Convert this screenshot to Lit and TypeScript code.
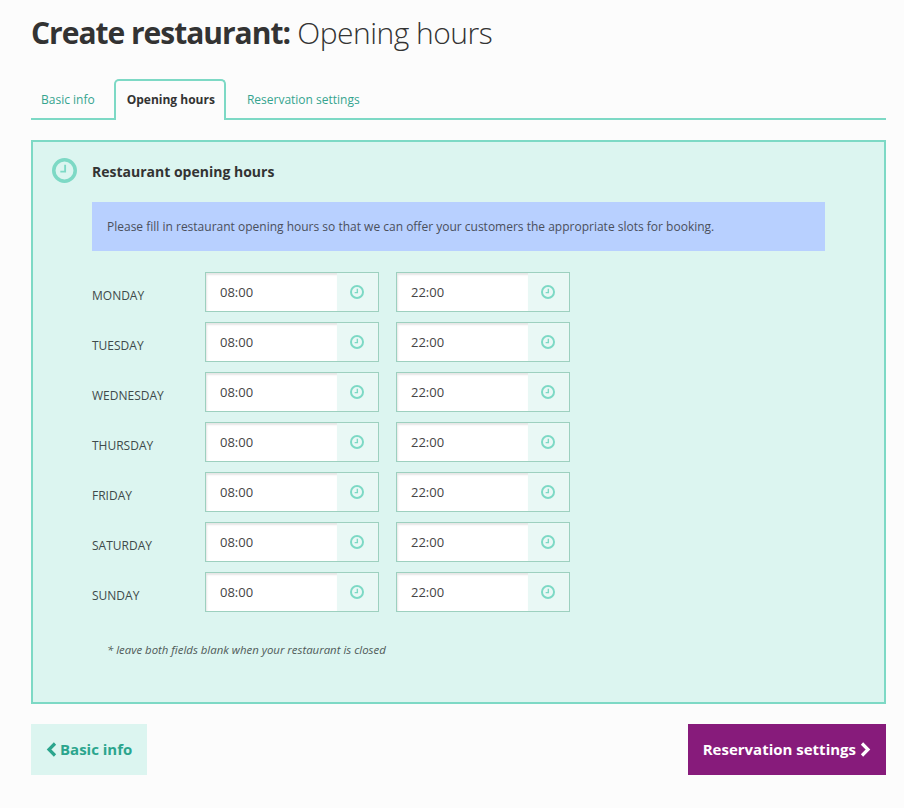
import { LitElement, html, css, svg } from "lit";
import { customElement } from "lit/decorators.js";

const DAYS = ["Monday", "Tuesday", "Wednesday", "Thursday", "Friday", "Saturday", "Sunday"];

const clock = (size: number, stroke: number, hand: number) => html`
	<svg class="clock" width=${size} height=${size} viewBox="0 0 24 24" aria-hidden="true">
		${svg`<circle cx="12" cy="12" r=${12 - stroke / 2} fill="none" stroke="currentColor" stroke-width=${stroke}></circle>
		<path d="M12.6 6.5v6.6H8" fill="none" stroke="currentColor" stroke-width=${hand}></path>`}
	</svg>
`;

@customElement("app-root")
export class AppRoot extends LitElement {
	static styles = css`
		:host {
			display: block;
			min-height: 808px;
			background: #fcfcfc;
			color: #333;
			font-family: "Open Sans", sans-serif;
		}

		.page {
			padding: 0 18px 33px 31px;
		}

		h1 {
			margin: 0;
			padding-top: 12px;
			height: 79px;
			box-sizing: border-box;
			font-size: 30px;
			line-height: 41px;
			font-weight: 300;
			letter-spacing: -0.5px;
			color: #333;
		}

		h1 b {
			font-weight: 700;
			letter-spacing: -1.02px;
		}

		.tabs {
			display: flex;
			height: 41px;
			box-sizing: border-box;
			border-bottom: 2px solid #7dd9c5;
			font-size: 12px;
		}

		.tab {
			padding: 0 10px;
			line-height: 41px;
			color: #35a48f;
		}

		.tab.active {
			height: 41px;
			box-sizing: border-box;
			margin: 0 11px 0 9px;
			padding: 0 9px 0 11px;
			line-height: 38px;
			border: 2px solid #7dd9c5;
			border-bottom: 0;
			border-radius: 5px 5px 0 0;
			background: #fcfcfc;
			color: #333;
			font-weight: 700;
		}

		.panel {
			margin-top: 20px;
			height: 564px;
			box-sizing: border-box;
			border: 2px solid #7dd9c5;
			background: #dcf5f0;
			padding: 0 59px;
		}

		.panel-title {
			display: flex;
			align-items: center;
			height: 60px;
			font-size: 14px;
			font-weight: 700;
		}

		.panel-title span {
			margin-top: -2px;
		}

		.panel-title .clock {
			margin: -3px 15px 0 -40px;
			color: #7dd9c5;
		}

		.notice {
			height: 49px;
			box-sizing: border-box;
			padding: 0 15px;
			background: #b8d0ff;
			font-size: 12px;
			line-height: 49px;
			color: #4a4f5c;
		}

		.rows {
			display: grid;
			gap: 10px;
			margin-top: 21px;
		}

		.row {
			display: flex;
			align-items: center;
			height: 40px;
		}

		.day {
			width: 113px;
			padding-top: 7px;
			font-size: 12px;
			text-transform: uppercase;
			color: #3e4a4a;
		}

		.field {
			display: flex;
			width: 174px;
			height: 40px;
			box-sizing: border-box;
			border: 1px solid #9dd0bf;
			background: #e9f8f5;
			margin-right: 17px;
		}

		.field input {
			width: 131px;
			height: 100%;
			box-sizing: border-box;
			border: 0;
			border-radius: 0;
			outline: 0;
			padding: 0 14px;
			background: #fff;
			box-shadow: inset 1px 2px 2px rgba(0, 0, 0, 0.1);
			font: 13px "Open Sans", sans-serif;
			color: #444;
		}

		.field .addon {
			flex: 1;
			display: flex;
			align-items: center;
			justify-content: center;
			padding: 0 1px 1px 0;
			color: #7dd9c5;
		}

		.hint {
			margin: 30px 0 0 15px;
			font-size: 11.4px;
			line-height: 15px;
			font-style: italic;
			color: #4f5a58;
		}

		.actions {
			display: flex;
			justify-content: space-between;
			margin-top: 20px;
		}

		.btn {
			display: flex;
			align-items: center;
			gap: 4px;
			height: 51px;
			box-sizing: border-box;
			padding: 0 15px 2px;
			border: 0;
			font: 700 15px "Open Sans", sans-serif;
		}

		.btn svg {
			margin-top: 2px;
		}

		.btn.back {
			gap: 3px;
			background: #dcf5f0;
			color: #2ba58d;
		}

		.btn.next {
			background: #871b7b;
			color: #fff;
		}
	`;

	private chevron(left: boolean) {
		return html`<svg width="11" height="15" viewBox="0 0 11 15" aria-hidden="true">
			<path
				d=${left ? "M9 1.5 3 7.5 9 13.5" : "M2 1.5 8 7.5 2 13.5"}
				fill="none"
				stroke="currentColor"
				stroke-width="3.2"
			></path>
		</svg>`;
	}

	private field(value: string) {
		return html`<div class="field">
			<input type="text" .value=${value} />
			<div class="addon">${clock(14, 3.4, 2.4)}</div>
		</div>`;
	}

	render() {
		return html`
			<div class="page">
				<h1><b>Create restaurant:</b> Opening hours</h1>
				<nav class="tabs">
					<div class="tab">Basic info</div>
					<div class="tab active">Opening hours</div>
					<div class="tab">Reservation settings</div>
				</nav>
				<section class="panel">
					<div class="panel-title">${clock(25, 3.4, 1.8)} <span>Restaurant opening hours</span></div>
					<div class="notice">
						Please fill in restaurant opening hours so that we can offer your customers the appropriate slots for booking.
					</div>
					<div class="rows">
						${DAYS.map(
							(day) => html`<div class="row">
								<div class="day">${day}</div>
								${this.field("08:00")} ${this.field("22:00")}
							</div>`
						)}
					</div>
					<p class="hint">* leave both fields blank when your restaurant is closed</p>
				</section>
				<div class="actions">
					<button class="btn back">${this.chevron(true)} Basic info</button>
					<button class="btn next">Reservation settings ${this.chevron(false)}</button>
				</div>
			</div>
		`;
	}
}
